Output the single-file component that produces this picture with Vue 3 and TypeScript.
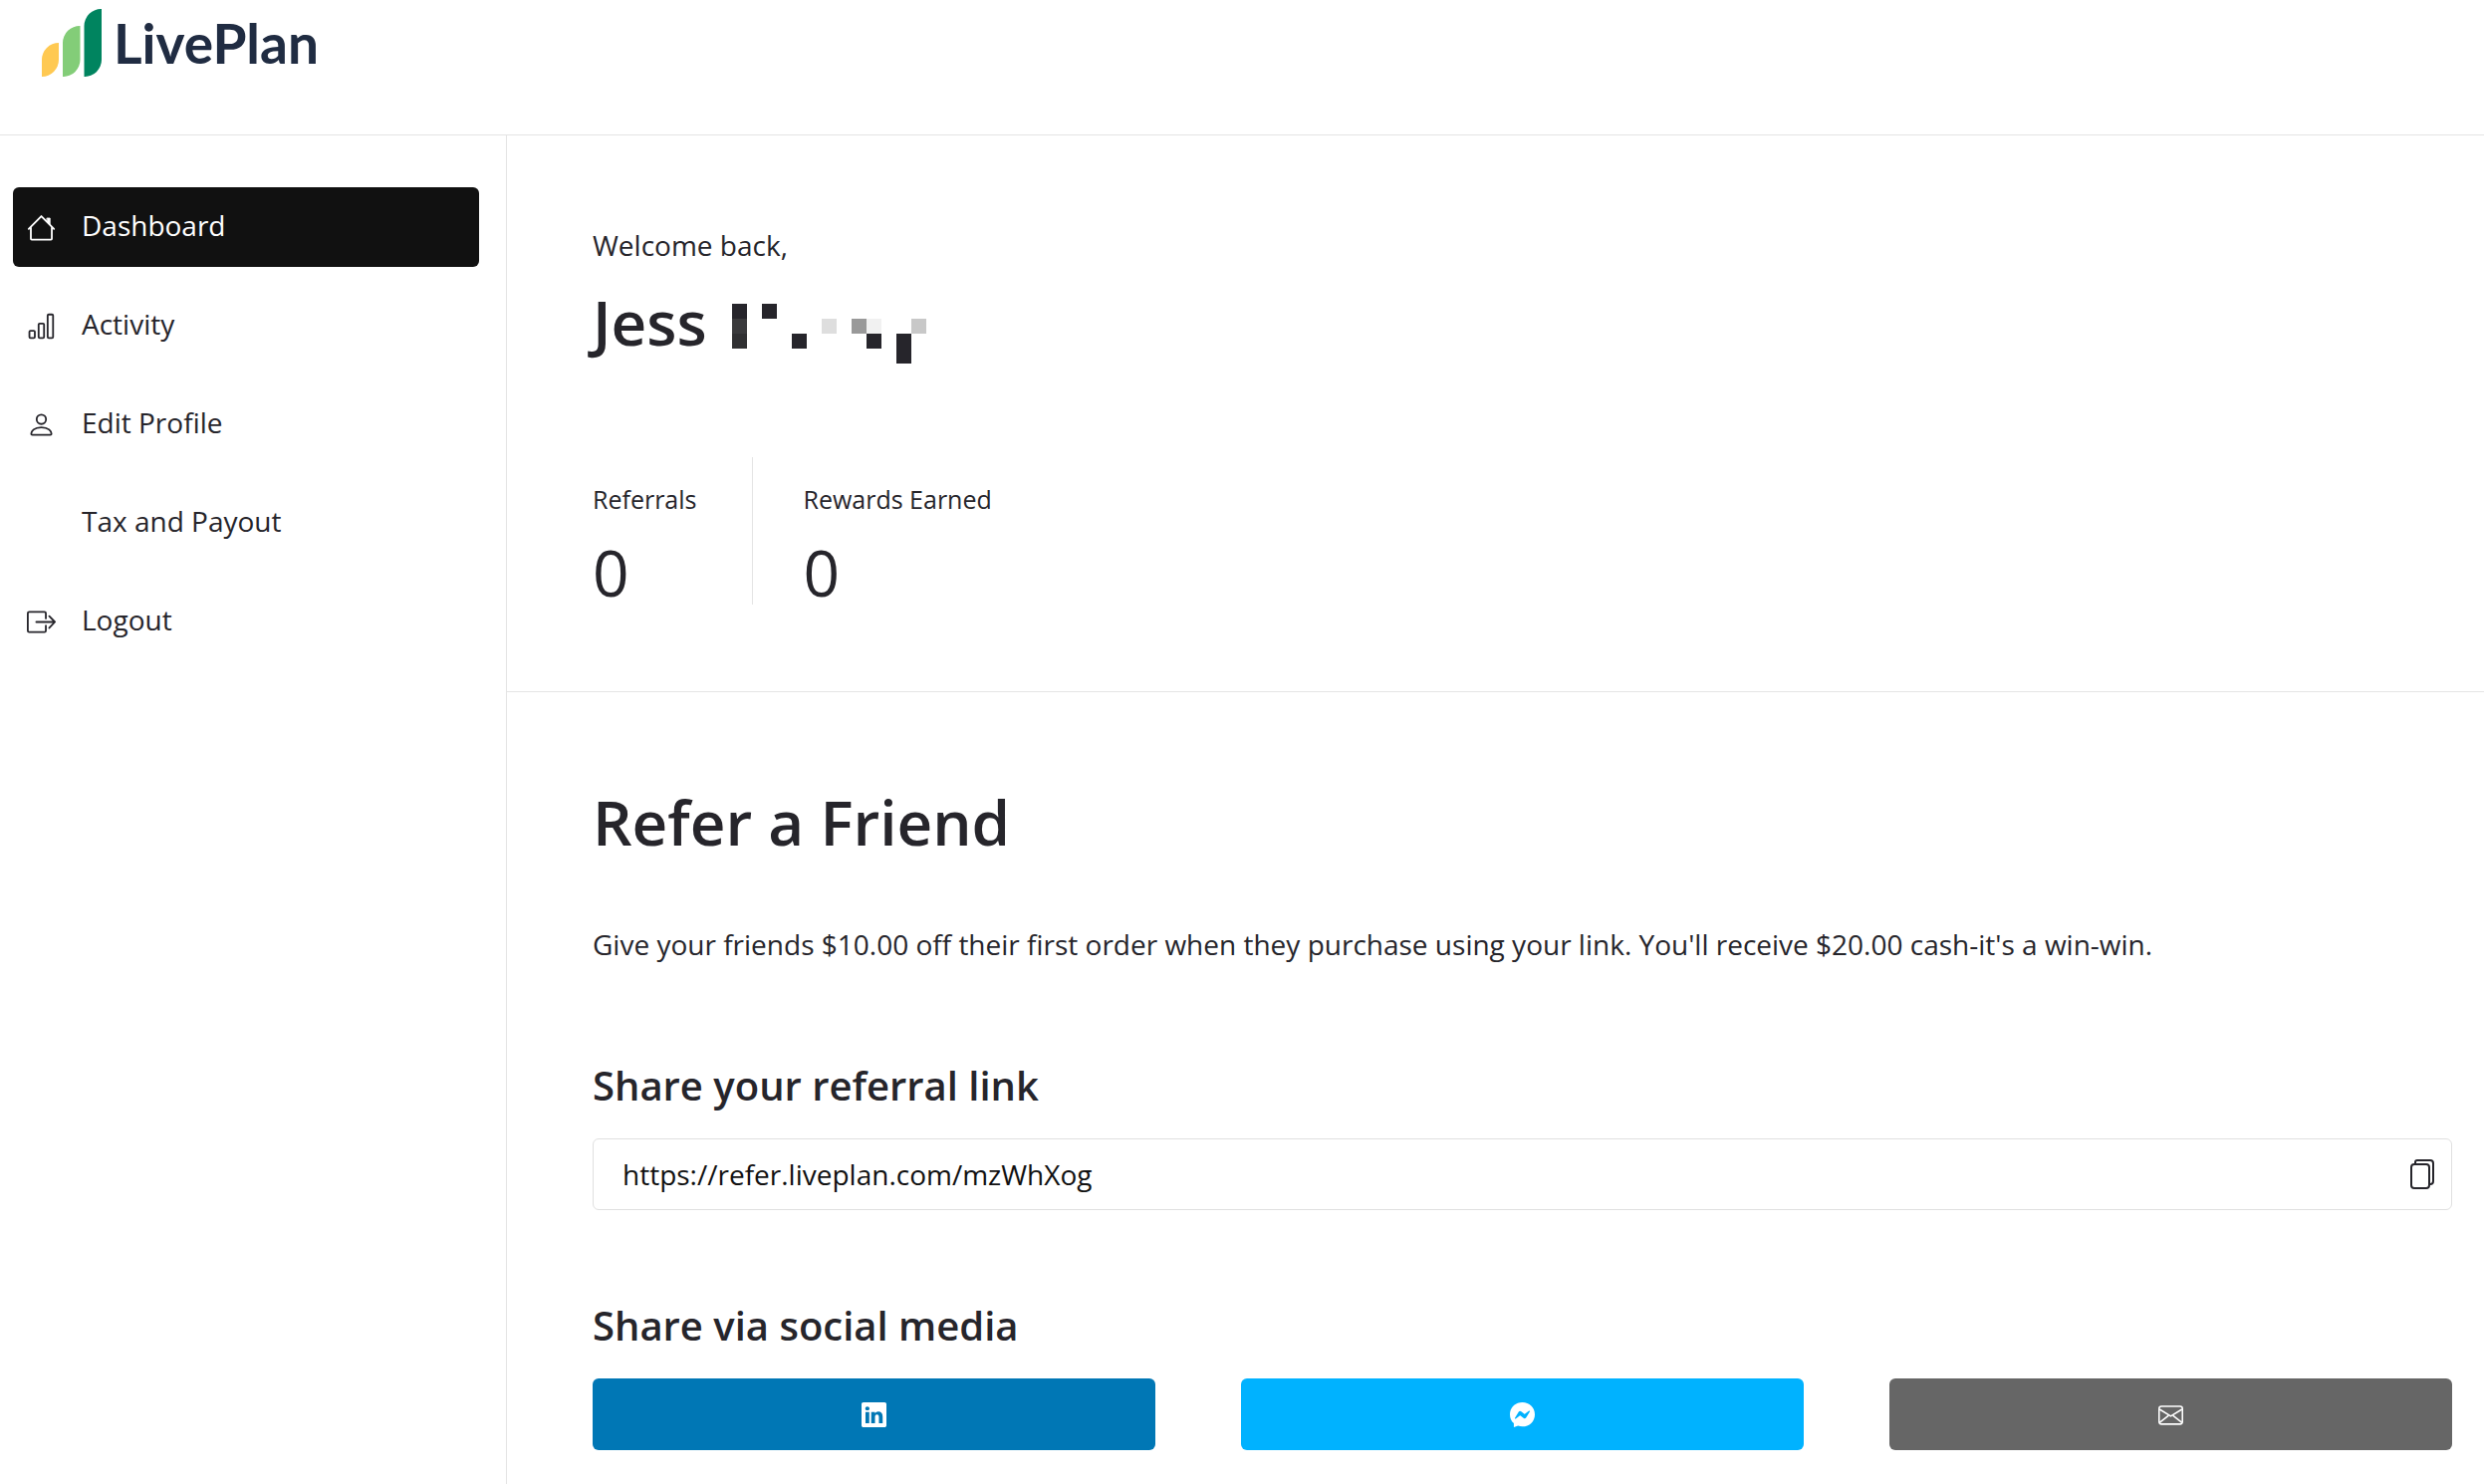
<script setup lang="ts">
import { ref } from 'vue'

interface NavItem {
  label: string
  icon: 'house' | 'bars' | 'person' | 'exit' | null
}

interface MaskCell {
  x: number
  y: number
  fill: string
}

const navItems: NavItem[] = [
  { label: 'Dashboard', icon: 'house' },
  { label: 'Activity', icon: 'bars' },
  { label: 'Edit Profile', icon: 'person' },
  { label: 'Tax and Payout', icon: null },
  { label: 'Logout', icon: 'exit' },
]
const active = ref('Dashboard')

const stats = [
  { label: 'Referrals', value: 0 },
  { label: 'Rewards Earned', value: 0 },
]

const referralLink = ref('https://refer.liveplan.com/mzWhXog')

// Mosaic that hides the surname, on a 13 x 4 grid
const maskCells: MaskCell[] = [
  { x: 0, y: 0, fill: '#26252b' },
  { x: 0, y: 1, fill: '#3a3a3c' },
  { x: 0, y: 2, fill: '#303032' },
  { x: 2, y: 0, fill: '#26252b' },
  { x: 4, y: 2, fill: '#26252b' },
  { x: 6, y: 1, fill: '#dedede' },
  { x: 8, y: 1, fill: '#999999' },
  { x: 9, y: 1, fill: '#f1f1f1' },
  { x: 9, y: 2, fill: '#26252b' },
  { x: 11, y: 2, fill: '#26252b' },
  { x: 11, y: 3, fill: '#26252b' },
  { x: 12, y: 1, fill: '#c8c8c8' },
]

function copyLink(): void {
  void navigator.clipboard?.writeText(referralLink.value)
}
</script>

<template>
  <div class="page">
    <header class="topbar">
      <a class="logo" href="#" aria-label="LivePlan">
        <svg class="logo-mark" viewBox="0 0 60 68" aria-hidden="true">
          <path fill="#ffc952" d="M0 68V51A17 17 0 0 1 17 34V51A17 17 0 0 1 0 68Z" />
          <path fill="#83cd78" d="M21 68V34A17 17 0 0 1 38.500 17V51A17 17 0 0 1 21 68Z" />
          <path fill="#00845f" d="M42.500 68V17A17 17 0 0 1 60 0V51A17 17 0 0 1 42.500 68Z" />
        </svg>
        <span class="logo-text">LivePlan</span>
      </a>
    </header>

    <div class="body">
      <nav class="sidebar" aria-label="Main">
        <a
          v-for="item in navItems"
          :key="item.label"
          href="#"
          class="nav-item"
          :class="{ active: item.label === active }"
          @click.prevent="active = item.label"
        >
          <span class="nav-icon">
            <svg v-if="item.icon === 'house'" class="line-icon" viewBox="0 0 16 16" aria-hidden="true">
              <path d="M1 8.700 8 1.700l7 7M2.200 8v6.200a.5.5 0 0 0 .5.5h10.600a.5.5 0 0 0 .5-.5V8" />
              <path class="solid" d="M11.200 2.800h1.600v3.800l-1.600-1.600z" />
            </svg>
            <svg v-else-if="item.icon === 'bars'" class="line-icon" viewBox="0 0 16 16" aria-hidden="true">
              <rect x="1.400" y="10.500" width="3" height="4" rx=".6" />
              <rect x="6.500" y="6.500" width="3" height="8" rx=".6" />
              <rect x="11.500" y="1.500" width="3" height="13" rx=".6" />
            </svg>
            <svg v-else-if="item.icon === 'person'" class="line-icon" viewBox="0 0 16 16" aria-hidden="true">
              <circle cx="8" cy="5" r="2.600" />
              <path d="M3 13.600h10c.4 0 .6-.2.6-.6 0-1.300-1.500-3.600-5.600-3.600S2.400 11.700 2.400 13c0 .4.200.6.6.6z" />
            </svg>
            <svg v-else-if="item.icon === 'exit'" class="line-icon" viewBox="0 0 16 16" aria-hidden="true">
              <path d="M10.500 6V3.200a.8.800 0 0 0-.8-.8H1.300a.8.800 0 0 0-.8.800v9.600a.8.800 0 0 0 .8.800h8.400a.8.800 0 0 0 .8-.8V10" />
              <path d="M5.200 8h10.200M12.400 4.800 15.500 8l-3.100 3.300" />
            </svg>
          </span>
          <span class="nav-label">{{ item.label }}</span>
        </a>
      </nav>

      <main class="content">
        <section class="hero">
          <p class="welcome">Welcome back,</p>
          <h1 class="name">
            <span>Jess</span>
            <svg class="mask" viewBox="0 0 13 4" shape-rendering="crispEdges" aria-hidden="true">
              <rect
                v-for="cell in maskCells"
                :key="`${cell.x}-${cell.y}`"
                :x="cell.x"
                :y="cell.y"
                width="1"
                height="1"
                :fill="cell.fill"
              />
            </svg>
          </h1>
          <dl class="stats">
            <div v-for="stat in stats" :key="stat.label" class="stat">
              <dt>{{ stat.label }}</dt>
              <dd>{{ stat.value }}</dd>
            </div>
          </dl>
        </section>

        <section class="refer">
          <h2 class="title">Refer a Friend</h2>
          <p class="offer">
            Give your friends $10.00 off their first order when they purchase using your link. You'll receive $20.00
            cash-it's a win-win.
          </p>

          <h3 class="subtitle"><label for="referral-link">Share your referral link</label></h3>
          <div class="link-box">
            <input id="referral-link" type="text" readonly :value="referralLink" />
            <button type="button" class="copy" aria-label="Copy link" @click="copyLink">
              <svg class="copy-icon" viewBox="0 0 24 30" aria-hidden="true">
                <path d="M5 4.500V3a2 2 0 0 1 2-2h13a3 3 0 0 1 3 3v18a3 3 0 0 1-3 3" />
                <rect x="1" y="5" width="18" height="24" rx="3" />
              </svg>
            </button>
          </div>

          <h3 class="subtitle social-heading">Share via social media</h3>
          <div class="social">
            <button type="button" class="share linkedin" aria-label="Share on LinkedIn">
              <svg viewBox="0 0 16 16" fill="#fff" aria-hidden="true">
                <path
                  d="M0 1.146C0 .513.526 0 1.175 0h13.650C15.474 0 16 .513 16 1.146v13.708c0 .633-.526 1.146-1.175 1.146H1.175C.526 16 0 15.487 0 14.854V1.146zm4.943 12.248V6.169H2.542v7.225h2.401zm-1.200-8.212c.837 0 1.358-.554 1.358-1.248-.015-.709-.520-1.248-1.342-1.248-.822 0-1.359.540-1.359 1.248 0 .694.521 1.248 1.327 1.248h.016zm4.908 8.212V9.359c0-.216.016-.432.080-.586.173-.431.568-.878 1.232-.878.869 0 1.216.662 1.216 1.634v3.865h2.401V9.250c0-2.220-1.184-3.252-2.764-3.252-1.274 0-1.845.700-2.165 1.193V6.169h-2.400c.030.678 0 7.225 0 7.225h2.400z"
                />
              </svg>
            </button>
            <button type="button" class="share messenger" aria-label="Share on Messenger">
              <svg viewBox="0 0 16 16" fill="#fff" fill-rule="evenodd" aria-hidden="true">
                <path
                  d="M8 0C3.500 0 0 3.300 0 7.760c0 2.330.960 4.350 2.510 5.740V16l2.700-.9c.870.280 1.800.420 2.790.420 4.500 0 8-3.300 8-7.760S12.500 0 8 0zM5.546 6.301l-2.350 3.728c-.225.358.214.761.551.506l2.525-1.916a.48.480 0 0 1 .578-.002l1.869 1.402a1.200 1.200 0 0 0 1.735-.320l2.350-3.728c.226-.358-.214-.761-.551-.506L9.728 7.381a.48.480 0 0 1-.578.002L7.281 5.980a1.200 1.200 0 0 0-1.735.320z"
                />
              </svg>
            </button>
            <button type="button" class="share email" aria-label="Share by email">
              <svg viewBox="0 0 16 16" fill="none" stroke="#fff" stroke-linejoin="round" aria-hidden="true">
                <rect x=".5" y="2.500" width="15" height="11.500" rx="1.500" />
                <path d="M.8 4.500 8 8.900l7.200-4.400M.8 13l5.700-4.500M15.200 13 9.500 8.500" />
              </svg>
            </button>
          </div>
        </section>
      </main>
    </div>
  </div>
</template>

<style>
body {
  margin: 0;
  background: #fff;
}
</style>

<style scoped>
.page {
  min-height: 100vh;
  display: flex;
  flex-direction: column;
  font-family: 'Open Sans', 'Noto Sans', sans-serif;
  font-size: 28px;
  line-height: 40px;
  color: #26252b;
}

.topbar {
  box-sizing: border-box;
  height: 136px;
  padding: 9px 42px 0;
  border-bottom: 1px solid #e4e4e4;
}

.logo {
  display: inline-flex;
  gap: 12px;
  color: #202c42;
  text-decoration: none;
}

.logo-mark {
  width: 60px;
  height: 68px;
}

.logo-text {
  font-family: Lato, sans-serif;
  font-size: 55px;
  font-weight: 700;
  line-height: 68px;
}

.body {
  flex: 1;
  display: flex;
}

.sidebar {
  box-sizing: border-box;
  flex: 0 0 509px;
  display: flex;
  flex-direction: column;
  gap: 19px;
  padding: 52px 27px 0 13px;
  border-right: 1px solid #e4e4e4;
}

.nav-item {
  display: flex;
  align-items: center;
  gap: 26px;
  height: 80px;
  padding: 0 14px;
  border-radius: 6px;
  color: #26252b;
  text-decoration: none;
}

.nav-item.active {
  background: #111;
  color: #fff;
}

.nav-icon {
  display: flex;
  width: 29px;
  height: 29px;
}

.nav-label {
  padding-bottom: 4px;
}

.line-icon {
  width: 29px;
  height: 29px;
  fill: none;
  stroke: currentColor;
  stroke-linecap: round;
  stroke-linejoin: round;
}

.line-icon .solid {
  fill: currentColor;
  stroke-width: 0.5;
}

.content {
  flex: 1;
  min-width: 0;
}

.hero {
  padding: 90px 32px 87px 86px;
  border-bottom: 1px solid #e4e4e4;
}

.welcome,
.offer {
  margin: 0;
}

.name {
  display: flex;
  align-items: flex-start;
  gap: 25px;
  margin: 17px 0 0;
  font-size: 62px;
  font-weight: 600;
  line-height: 80px;
}

.mask {
  width: 195px;
  height: 60px;
  margin-top: 22px;
}

.stats {
  display: flex;
  margin: 94px 0 0;
}

.stat {
  padding-top: 24px;
}

.stat + .stat {
  margin-left: 56px;
  padding-left: 50px;
  border-left: 1px solid #e4e4e4;
}

.stat dt {
  font-size: 25px;
  line-height: 36px;
}

.stat dd {
  margin: 24px 0 0;
  font-size: 64px;
  line-height: 64px;
}

.refer {
  padding: 90px 32px 34px 86px;
}

.title {
  margin: 0 0 63px;
  font-size: 62px;
  font-weight: 600;
  line-height: 80px;
}

.subtitle {
  margin: 94px 0 25px;
  font-size: 40px;
  font-weight: 600;
  line-height: 56px;
}

.social-heading {
  margin-top: 88px;
}

.link-box {
  box-sizing: border-box;
  display: flex;
  align-items: center;
  height: 72px;
  border: 1px solid #e0e0e0;
  border-radius: 6px;
}

.link-box input {
  flex: 1;
  min-width: 0;
  height: 40px;
  padding: 0 0 0 29px;
  border: 0;
  outline: 0;
  background: transparent;
  color: #111;
  font: inherit;
}

.copy {
  display: flex;
  padding: 0 17px;
  border: 0;
  background: transparent;
  color: #26252b;
  cursor: pointer;
}

.copy-icon {
  width: 24px;
  height: 30px;
  fill: none;
  stroke: currentColor;
  stroke-width: 2;
}

.social {
  display: grid;
  grid-template-columns: repeat(3, 1fr);
  gap: 86px;
}

.share {
  display: flex;
  align-items: center;
  justify-content: center;
  height: 72px;
  padding: 0;
  border: 0;
  border-radius: 6px;
  cursor: pointer;
}

.share svg {
  width: 25px;
  height: 25px;
}

.linkedin {
  background: #0077b5;
}

.messenger {
  background: #00b2ff;
}

.email {
  background: #666;
}
</style>
